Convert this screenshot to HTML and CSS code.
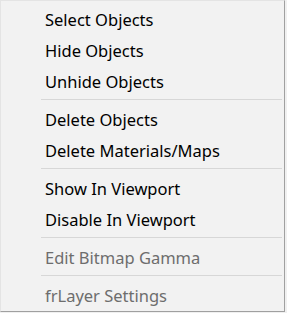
FILE: index.html
```html
<!DOCTYPE html>
<html lang="en">
<head>
    <meta charset="UTF-8"/>
    <title>Context Menu</title>
    <link rel="stylesheet" href="styles.css">
</head>
<body>
<div class="context-menu">
    <div class="menu-item">Select Objects</div>
    <div class="menu-item">Hide Objects</div>
    <div class="menu-item">Unhide Objects</div>
    <div class="menu-separator"></div>
    <div class="menu-item">Delete Objects</div>
    <div class="menu-item">Delete Materials/Maps</div>
    <div class="menu-separator"></div>
    <div class="menu-item">Show In Viewport</div>
    <div class="menu-item">Disable In Viewport</div>
    <div class="menu-separator"></div>
    <div class="menu-item disabled">Edit Bitmap Gamma</div>
    <div class="menu-separator"></div>
    <div class="menu-item disabled">frLayer Settings</div>
</div>
</body>
</html>
```
FILE: styles.css
```css
body {
    margin: 0;
    background: #f0f0f0;
}

/* menu frame */
.context-menu {
    box-sizing: border-box;
    width: 285px;
    height: 312px;
    padding: 3px 2px 2px 2px;
    background: #f2f2f2;
    border: 1px solid;
    border-color: #e4e4e4 #a0a0a0 #a0a0a0 #e4e4e4;
    font-family: "Noto Sans", "Open Sans", sans-serif;
    font-size: 16.5px;
    color: #000000;
}

.menu-item {
    height: 31px;
    line-height: 31px;
    padding-left: 42px;
    white-space: nowrap;
}

.menu-item.disabled {
    color: #6d6d6d;
}

.menu-separator {
    height: 1px;
    margin: 2px 0 4px 38px;
    background: #d7d7d7;
}
```
